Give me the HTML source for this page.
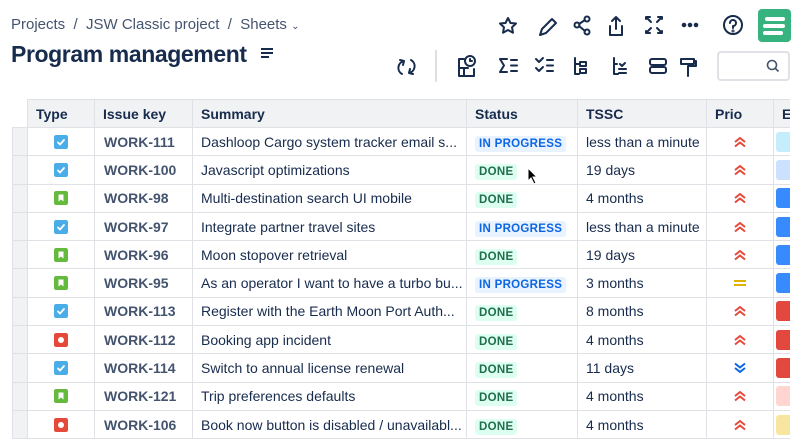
<!DOCTYPE html>
<html><head><meta charset="utf-8"><style>
*{box-sizing:border-box;margin:0;padding:0}
body{width:800px;height:442px;overflow:hidden;background:#fff;font-family:"Liberation Sans",sans-serif;color:#172b4d;position:relative}
.bc{position:absolute;left:11px;top:16px;font-size:15px;color:#44546f}
h1{position:absolute;left:11px;top:41px;font-size:23px;font-weight:600;color:#172b4d;letter-spacing:-0.4px}
.ic{position:absolute}
table{position:absolute;left:12px;top:99px;border-collapse:collapse;font-size:14px;width:790px;table-layout:fixed}
td,th{border:1px solid #dfe1e6;height:28.3px;padding:0 8px;white-space:nowrap;overflow:hidden}
th{background:#f1f2f4;text-align:left;font-weight:700;height:28px;border-top:1px solid #dfe1e6}
td.g{background:#f1f2f4;border-left:1px solid #dfe1e6}
th.g{background:#fff;border:none;border-bottom:1px solid #dfe1e6}
.key{color:#44546f;font-weight:600;padding-left:9px}
.lz{font-size:11.5px;font-weight:700;padding:2px 4px;border-radius:3px;letter-spacing:.3px}
.ip{background:#e9f2ff;color:#0c66e4}
.dn{background:#dcfff1;color:#216e4e}
.ty{display:block;margin:0 auto;width:14px;height:14px;border-radius:2px}
.tag{display:inline-block;width:14px;height:20px;border-radius:3px 0 0 3px;margin-left:-6px;vertical-align:middle}
.pr{text-align:center;padding:0}
.pr svg{display:block;margin:0 auto}
.sb{position:absolute;left:717px;top:51px;width:73px;height:30px;border:2px solid #dfe1e6;border-radius:4px}
</style></head><body>
<svg width="0" height="0" style="position:absolute"><defs>
<symbol id="tk" viewBox="0 0 14 14"><rect width="14" height="14" rx="2" fill="#4bade8"/><path d="M4 7.5l2 2 4-4.5" stroke="#fff" stroke-width="1.8" fill="none" stroke-linecap="round"/></symbol>
<symbol id="st" viewBox="0 0 14 14"><rect width="14" height="14" rx="2" fill="#63ba3c"/><path d="M4.5 3.5h5v7l-2.5-2-2.5 2z" fill="#fff"/></symbol>
<symbol id="bg" viewBox="0 0 14 14"><rect width="14" height="14" rx="2" fill="#e5493a"/><circle cx="7" cy="7" r="3" fill="#fff"/></symbol>
<symbol id="hi" viewBox="0 0 16 12"><path d="M3 6l5-4 5 4M3 10.5l5-4 5 4" stroke="#e5493a" stroke-width="2" fill="none"/></symbol>
<symbol id="lo" viewBox="0 0 16 12"><path d="M3 1.5l5 4 5-4M3 6l5 4 5-4" stroke="#0c66e4" stroke-width="2" fill="none"/></symbol>
<symbol id="md" viewBox="0 0 16 12"><path d="M2 4h12M2 8h12" stroke="#e2b203" stroke-width="2"/></symbol>
</defs></svg>
<div class="bc">Projects &nbsp;/ &nbsp;JSW Classic project &nbsp;/ &nbsp;Sheets <span style="font-size:10px">⌄</span></div>
<h1>Program management</h1>
<svg class="ic" style="left:260px;top:47px" width="14" height="12"><path d="M1 2h12M1 6h12M1 10h8" stroke="#172b4d" stroke-width="2"/></svg>
<svg class="ic" style="left:490px;top:8px" width="260" height="36" fill="none" stroke="#172b4d" stroke-width="2" stroke-linecap="round" stroke-linejoin="round">
<path d="M18 10l2.5 5 5.5 .5-4 3.8 1 5.4-5-2.7-5 2.7 1-5.4-4-3.8 5.5-.5z"/>
<path d="M50 27l2-6 10-10 4 4-10 10z"/>
<circle cx="87" cy="17" r="2.5"/><circle cx="97" cy="11" r="2.5"/><circle cx="97" cy="24" r="2.5"/><path d="M89 16l6-4M89 18l6 5"/>
<path d="M120 18v9h12v-9M126 9v12M122 13l4-4 4 4"/>
<path d="M156 11v-2h4M168 9h4v2M172 23v2h-4M160 25h-4v-2M157 10l4 4M171 10l-4 4M171 24l-4-4M157 24l4-4"/>
<circle cx="194" cy="17" r="1.3" fill="#172b4d"/><circle cx="200" cy="17" r="1.3" fill="#172b4d"/><circle cx="206" cy="17" r="1.3" fill="#172b4d"/>
<circle cx="243" cy="17" r="9"/><path d="M240 15a3 3 0 1 1 3 3v2"/><circle cx="243" cy="23" r=".5"/>
</svg>
<svg class="ic" style="left:390px;top:50px" width="320" height="34" fill="none" stroke="#172b4d" stroke-width="2" stroke-linecap="round" stroke-linejoin="round">
<path d="M12 24a7 7 0 0 1 2-13M10 10l4 1-1 4M21 10a7 7 0 0 1-2 13M23 24l-4-1 1-4"/>
<path d="M46 1" />
<path d="M74 9h-5v17h15v-7M69 18h9M74 18v8"/><circle cx="80" cy="11" r="5"/><path d="M80 9v2h2"/>
<path d="M117 9h-7l4 6.5-4 6.5h7M121 10h6M121 15.5h6M121 21h6"/>
<path d="M146 9l3 3 4-4M146 18l3 3 4-4M157 10h6M157 15.5h6M157 21h6"/>
<path d="M185 8v16h4M185 14h4M190 12h6v4h-6zM190 19h6v4h-6z"/>
<path d="M224 8v16h4M224 14h3M230 14l2 2 3-3M229 19h7M229 23h7"/>
<rect x="260" y="9" width="16" height="6" rx="2"/><rect x="260" y="17" width="16" height="6" rx="2"/>
<path d="M291 9h13v5h-13zM304 11h2v5h-8v3M298 19v7"/>
</svg>
<svg class="ic" style="left:435px;top:50px" width="2" height="32"><path d="M1 0v32" stroke="#dcdfe4" stroke-width="2"/></svg>
<div class="ic" style="left:758px;top:9px;width:33px;height:33px;background:#36b37e;border-radius:4px"><svg width="33" height="33"><path d="M9 10h16M7 17h18M7 24h16" stroke="#fff" stroke-width="4" stroke-linecap="round"/></svg></div>
<div class="sb"><svg style="position:absolute;left:47px;top:6px" width="14" height="14" fill="none" stroke="#44546f" stroke-width="1.6"><circle cx="6" cy="6" r="4.5"/><path d="M9.5 9.5l3 3"/></svg></div>
<table>
<colgroup><col style="width:15px"><col style="width:67px"><col style="width:98px"><col style="width:274px"><col style="width:111px"><col style="width:129px"><col style="width:67px"><col style="width:29px"></colgroup>
<tr><th class="g"></th><th>Type</th><th>Issue key</th><th>Summary</th><th>Status</th><th>TSSC</th><th>Prio</th><th>E</th></tr>
<tr><td class="g"></td><td><svg class="ty"><use href="#tk"/></svg></td><td class="key">WORK-111</td><td>Dashloop Cargo system tracker email s...</td><td><span class="lz ip">IN PROGRESS</span></td><td>less than a minute</td><td class="pr"><svg width="16" height="12"><use href="#hi"/></svg></td><td><span class="tag" style="background:#c6edfb"></span></td></tr>
<tr><td class="g"></td><td><svg class="ty"><use href="#tk"/></svg></td><td class="key">WORK-100</td><td>Javascript optimizations</td><td><span class="lz dn">DONE</span></td><td>19 days</td><td class="pr"><svg width="16" height="12"><use href="#hi"/></svg></td><td><span class="tag" style="background:#cce0ff"></span></td></tr>
<tr><td class="g"></td><td><svg class="ty"><use href="#st"/></svg></td><td class="key">WORK-98</td><td>Multi-destination search UI mobile</td><td><span class="lz dn">DONE</span></td><td>4 months</td><td class="pr"><svg width="16" height="12"><use href="#hi"/></svg></td><td><span class="tag" style="background:#388bff"></span></td></tr>
<tr><td class="g"></td><td><svg class="ty"><use href="#tk"/></svg></td><td class="key">WORK-97</td><td>Integrate partner travel sites</td><td><span class="lz ip">IN PROGRESS</span></td><td>less than a minute</td><td class="pr"><svg width="16" height="12"><use href="#hi"/></svg></td><td><span class="tag" style="background:#388bff"></span></td></tr>
<tr><td class="g"></td><td><svg class="ty"><use href="#st"/></svg></td><td class="key">WORK-96</td><td>Moon stopover retrieval</td><td><span class="lz dn">DONE</span></td><td>19 days</td><td class="pr"><svg width="16" height="12"><use href="#hi"/></svg></td><td><span class="tag" style="background:#388bff"></span></td></tr>
<tr><td class="g"></td><td><svg class="ty"><use href="#st"/></svg></td><td class="key">WORK-95</td><td>As an operator I want to have a turbo bu...</td><td><span class="lz ip">IN PROGRESS</span></td><td>3 months</td><td class="pr"><svg width="16" height="12"><use href="#md"/></svg></td><td><span class="tag" style="background:#388bff"></span></td></tr>
<tr><td class="g"></td><td><svg class="ty"><use href="#tk"/></svg></td><td class="key">WORK-113</td><td>Register with the Earth Moon Port Auth...</td><td><span class="lz dn">DONE</span></td><td>8 months</td><td class="pr"><svg width="16" height="12"><use href="#hi"/></svg></td><td><span class="tag" style="background:#e2483d"></span></td></tr>
<tr><td class="g"></td><td><svg class="ty"><use href="#bg"/></svg></td><td class="key">WORK-112</td><td>Booking app incident</td><td><span class="lz dn">DONE</span></td><td>4 months</td><td class="pr"><svg width="16" height="12"><use href="#hi"/></svg></td><td><span class="tag" style="background:#e2483d"></span></td></tr>
<tr><td class="g"></td><td><svg class="ty"><use href="#tk"/></svg></td><td class="key">WORK-114</td><td>Switch to annual license renewal</td><td><span class="lz dn">DONE</span></td><td>11 days</td><td class="pr"><svg width="16" height="12"><use href="#lo"/></svg></td><td><span class="tag" style="background:#e2483d"></span></td></tr>
<tr><td class="g"></td><td><svg class="ty"><use href="#st"/></svg></td><td class="key">WORK-121</td><td>Trip preferences defaults</td><td><span class="lz dn">DONE</span></td><td>4 months</td><td class="pr"><svg width="16" height="12"><use href="#hi"/></svg></td><td><span class="tag" style="background:#ffd5d2"></span></td></tr>
<tr><td class="g"></td><td><svg class="ty"><use href="#bg"/></svg></td><td class="key">WORK-106</td><td>Book now button is disabled / unavailabl...</td><td><span class="lz dn">DONE</span></td><td>4 months</td><td class="pr"><svg width="16" height="12"><use href="#hi"/></svg></td><td><span class="tag" style="background:#f8e6a0"></span></td></tr>
</table>
<div style="position:absolute;left:790px;top:95px;width:10px;height:347px;background:#fff"></div>
<svg class="ic" style="left:527px;top:167px" width="12" height="18"><path d="M1 1v13l3-3 3 6 2-1-3-6h4z" fill="#000" stroke="#fff"/></svg>
</body></html>
